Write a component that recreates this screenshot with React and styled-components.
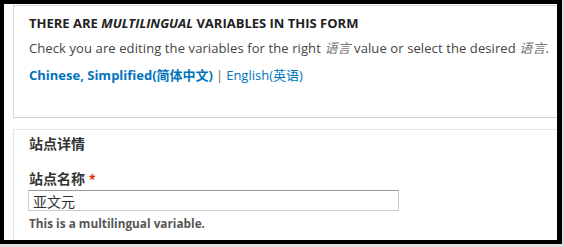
import React from 'react';
import styled, { createGlobalStyle } from 'styled-components';

const GlobalStyle = createGlobalStyle`
  html, body {
    margin: 0;
    padding: 0;
    background: #dedede;
  }
  body {
    font-family: 'Open Sans', 'Noto Sans CJK SC', sans-serif;
    color: #333;
  }
`;

const Frame = styled.div`
  box-sizing: border-box;
  width: 562px;
  height: 244px;
  border-style: solid;
  border-color: #000;
  border-width: 4px 5px 4px 4px;
  background: #fff;
  overflow: hidden;
  padding: 1px 0 0 9px;
  display: flex;
  flex-direction: column;
  gap: 11px;
`;

const Panel = styled.div`
  box-sizing: border-box;
  width: 600px;
  flex-shrink: 0;
  border: 1px solid ${(p) => (p.$top ? '#d9d9d9' : '#e3e3e3')};
  border-bottom-color: ${(p) => (p.$top ? '#cfcfcf' : '#e3e3e3')};
  padding: ${(p) => p.$padding};
  height: ${(p) => p.$height};
`;

const Heading = styled.h2`
  margin: 0;
  font-size: 13px;
  line-height: 18px;
  font-weight: 700;
  color: #222;
  text-transform: uppercase;
  em {
    font-style: italic;
  }
`;

const Message = styled.p`
  margin: 7px 0 0;
  font-size: 13px;
  line-height: 18px;
  letter-spacing: 0.1px;
  color: #444;
  em {
    font-style: italic;
    color: #777;
  }
`;

const Languages = styled.div`
  margin-top: 9px;
  font-size: 13px;
  line-height: 18px;
  color: #0074bd;
`;

const LangLink = styled.a`
  color: #0074bd;
  text-decoration: none;
  font-weight: ${(p) => (p.$active ? 700 : 400)};
`;

const Sep = styled.span`
  color: #666;
  margin: 0 3px;
`;

const Legend = styled.div`
  font-size: 14px;
  line-height: 20px;
  font-weight: 700;
  color: #333;
`;

const Field = styled.div`
  margin-top: 16px;
`;

const Label = styled.label`
  display: block;
  font-size: 14px;
  line-height: 18px;
  font-weight: 700;
  color: #333;
`;

const Required = styled.span`
  color: #e32700;
  margin-left: 4px;
  font-size: 12px;
`;

const TextInput = styled.input`
  box-sizing: border-box;
  display: block;
  width: 371px;
  height: 21px;
  margin: 1px 0 0 -1px;
  padding: 0 4px;
  border: 1px solid #ccc;
  border-top-color: #999;
  font-family: 'Noto Sans CJK SC', sans-serif;
  font-size: 14px;
  color: #333;
  outline: none;
`;

const Description = styled.div`
  margin-top: 4px;
  font-size: 11.8px;
  line-height: 16px;
  font-weight: 700;
  color: #555;
`;

export default function App() {
  return (
    <>
      <GlobalStyle />
      <Frame>
        <Panel $top $height="113px" $padding="8px 15px">
          <Heading>
            There are <em>multilingual</em> variables in this form
          </Heading>
          <Message>
            Check you are editing the variables for the right <em>语言</em> value or select the desired <em>语言</em>.
          </Message>
          <Languages>
            <LangLink $active href="#">Chinese, Simplified(简体中文)</LangLink>
            <Sep>|</Sep>
            <LangLink href="#">English(英语)</LangLink>
          </Languages>
        </Panel>
        <Panel $height="140px" $padding="4px 15px">
          <Legend>站点详情</Legend>
          <Field>
            <Label>
              站点名称<Required>*</Required>
            </Label>
            <TextInput defaultValue="亚文元" />
            <Description>This is a multilingual variable.</Description>
          </Field>
        </Panel>
      </Frame>
    </>
  );
}
